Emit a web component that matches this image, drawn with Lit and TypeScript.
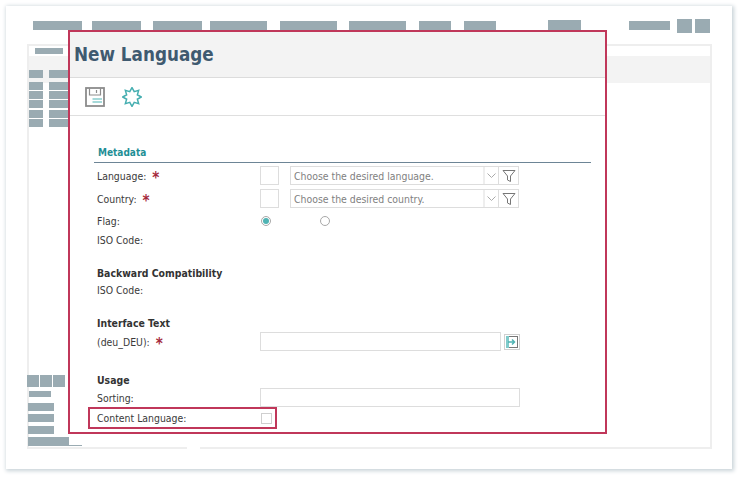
import { LitElement, html, css } from "lit";
import { customElement } from "lit/decorators.js";

const nav: [number, number][] = [[49, 10], [49, 12], [49, 8], [57, 13], [57, 12], [57, 13], [32, 13], [32, 52]];

const starPoints = Array.from({ length: 16 }, (_, i) => {
  const r = i % 2 === 0 ? 9.4 : 5.8;
  const a = (i * Math.PI) / 8 - Math.PI / 2;
  return `${(10 + r * Math.cos(a)).toFixed(2)},${(10 + r * Math.sin(a)).toFixed(2)}`;
}).join(" ");

@customElement("app-root")
export class AppRoot extends LitElement {
  static styles = css`
    :host { display: block; position: relative; width: 742px; height: 479px; overflow: hidden; background: #fff;
      font-family: "DejaVu Sans", "Noto Sans", sans-serif; font-stretch: condensed; font-size: 10.4px; color: #3a3a3a; }
    * { box-sizing: border-box; }
    .card { position: absolute; left: 6px; top: 6px; width: 726px; height: 463px; background: #fff;
      box-shadow: 1px 1px 4px 1px #c9d3d8; padding: 13px 20px 20px 21px; display: flex; flex-direction: column; }
    .b { background: #9aabb2; flex: none; }
    .nav { display: flex; align-items: flex-start; height: 25px; padding: 2px 0 0 6px; }
    .nav .b { height: 9px; }
    .nav .tall { height: 10px; margin-top: -1px; width: 33px; }
    .nav .wide { width: 41px; height: 9px; margin-left: 48px; }
    .nav .sq { width: 15px; height: 14px; margin-top: -2px; margin-left: 3px; }
    .nav .sq.first { margin-left: 7px; }
    .panel { flex: 1; display: flex; gap: 13px; min-height: 0; }
    .left { width: 160px; border: solid #eeeeee; border-width: 2px 0 2px 2px; padding-bottom: 1px; position: relative;
      display: flex; flex-direction: column; }
    .right { flex: 1; border: solid #eeeeee; border-width: 2px 2px 2px 0; display: flex; flex-direction: column; padding-top: 10px; }
    .band { height: 27px; background: #f3f3f3; flex: none; }
    .tabbar { height: 10px; padding: 2px 0 0 6px; flex: none; }
    .tabbar .b { width: 28px; height: 6px; }
    .tbl { display: grid; grid-template-columns: 14px 20px; column-gap: 6px; row-gap: 1.3px; margin: -13px 0 0 0; flex: none; }
    .tbl .b { height: 8px; }
    .tbl .b:nth-child(1), .tbl .b:nth-child(2) { margin-bottom: 2.5px; }
    .fill { flex: 1; }
    .btns { display: flex; gap: 1px; margin-left: -2px; flex: none; }
    .btns .b { width: 12px; height: 12px; }
    .s1 { width: 22px; height: 6px; margin: 4px 0 6px 0; }
    .s2 { width: 26px; height: 8px; margin: 0 0 3.5px -1px; }
    .s3 { width: 41px; height: 8px; margin: 0 0 0 -1px; }
    .tail { height: 1px; width: 54px; background: #9aabb2; margin-left: -1px; flex: none; }

    .modal { position: absolute; left: 68px; top: 30px; width: 539px; height: 404px; background: #fff; border: 2px solid #c0375a;
      display: flex; flex-direction: column; }
    .head { height: 46px; flex: none; background: #f3f3f3; border-bottom: 1px solid #dcdcdc; padding: 10px 0 0 4px;
      font-size: 18.7px; font-weight: 700; line-height: 26px; color: #3f5a70; }
    .tools { height: 38px; flex: none; border-bottom: 1px solid #dfdfdf; display: flex; align-items: center; padding: 0 0 0 15px; gap: 17px; }
    .form { padding: 31px 15px 0 27px; display: flex; flex-direction: column; flex: none; }
    .meta { font-size: 10px; font-weight: 700; color: #1f8f96; height: 15px; line-height: 12px; padding-left: 1px; flex: none; }
    .rule { height: 1px; background: #6d8596; margin: 0 -1px 1px -3px; flex: none; }
    .row { display: flex; align-items: center; height: 23px; flex: none; }
    .label { width: 163px; flex: none; line-height: 12px; }
    .star { display: inline-block; transform: translateY(3px); color: #a52a3c; font-weight: 700; font-size: 15px; margin-left: 3px; line-height: 10px; }
    .sm { height: 19px; border: 1px solid #dddddd; width: 19px; flex: none; margin-right: 11px; }
    .select { width: 229px; height: 19px; border: 1px solid #dddddd; display: flex; flex: none; color: #7f7f7f; align-items: center; }
    .select .txt { flex: 1; padding-left: 3px; white-space: nowrap; }
    .select .arr { width: 15px; height: 17px; border-left: 2px solid #eeeeee; display: flex; align-items: center; justify-content: center; }
    .select .fil { width: 20px; height: 17px; border-left: 1px solid #dddddd; display: flex; align-items: center; justify-content: center; }
    .r19 { height: 19px; }
    .radio { width: 10px; height: 10px; border-radius: 50%; border: 1px solid #a8a8a8; display: flex; align-items: center; justify-content: center; flex: none; }
    .radio.on::after { content: ""; width: 6px; height: 6px; border-radius: 50%; background: #4fb3b3; }
    .radios { display: flex; padding-left: 1px; gap: 49px; }
    .h { font-weight: 700; color: #333; line-height: 12px; height: 14px; flex: none; }
    .h.short { height: 13px; }
    .h.back { margin-top: 18px; }
    .h.iface { margin-top: 18px; height: 15px; }
    .h.usage { margin-top: 23px; }
    .flag { margin-top: 1px; }
    .input { height: 19px; border: 1px solid #dddddd; flex: none; }
    .input.w241 { width: 241px; }
    .input.w260 { width: 260px; }
    .btn { width: 16px; height: 16px; border: 1px solid #d0d0d0; margin-left: 3px; padding: 1px; display: flex; }
    .mark { display: flex; align-items: center; height: 22px; width: 189px; border: 2px solid #c0375a; margin: 0 0 0 -9px; padding-left: 7px; flex: none; }
    .mark .label { width: 164px; }
    .cb { width: 11px; height: 11px; border: 1px solid #cfcfcf; flex: none; }
  `;

  filter() {
    return html`<svg width="14" height="14" viewBox="0 0 14 14" fill="none" stroke="#777" stroke-width="1">
      <path d="M1 1.500h12L8.500 7v5.500l-3-1.500V7z" /></svg>`;
  }
  chev() {
    return html`<svg width="9" height="6" viewBox="0 0 9 6" fill="none" stroke="#aaa"><path d="M.5 .5 4.500 4.500 8.500 .5" /></svg>`;
  }
  star() {
    return html`<span class="star">*</span>`;
  }

  render() {
    const rows = Array.from({ length: 12 }, () => html`<div class="b"></div>`);
    return html`
      <div class="card">
        <div class="nav">
          ${nav.map(([w, m]) => html`<div class="b" style="width:${w}px;margin-right:${m}px"></div>`)}
          <div class="b tall"></div>
          <div class="b wide"></div>
          <div class="b sq first"></div>
          <div class="b sq"></div>
        </div>
        <div class="panel">
          <div class="left">
            <div class="tabbar"><div class="b"></div></div>
            <div class="band"></div>
            <div class="tbl">${rows}</div>
            <div class="fill"></div>
            <div class="btns"><div class="b"></div><div class="b"></div><div class="b"></div></div>
            <div class="b s1"></div>
            <div class="b s2"></div>
            <div class="b s2"></div>
            <div class="b s2"></div>
            <div class="b s3"></div>
            <div class="tail"></div>
          </div>
          <div class="right"><div class="band"></div></div>
        </div>
      </div>

      <div class="modal">
        <div class="head">New Language</div>
        <div class="tools">
          <svg width="20" height="20" viewBox="0 0 20 20" fill="none">
            <rect x="1" y="1" width="18" height="18" stroke="#8c8c8c" stroke-width="1.800" />
            <path d="M4.500 1.500v6.500h11v-6.500M11.500 3v3" stroke="#8c8c8c" stroke-width="1.200" />
            <path d="M7.500 12h9.500M7.500 15h9.500" stroke="#4fb3b3" stroke-width="1.200" />
          </svg>
          <svg width="20" height="20" viewBox="0 0 20 20" fill="none" stroke="#45aeb0" stroke-width="1.500">
            <polygon points=${starPoints} />
          </svg>
        </div>
        <div class="form">
          <div class="meta">Metadata</div>
          <div class="rule"></div>
          <div class="row">
            <div class="label">Language: ${this.star()}</div>
            <div class="sm"></div>
            <div class="select"><span class="txt">Choose the desired language.</span><span class="arr">${this.chev()}</span><span class="fil">${this.filter()}</span></div>
          </div>
          <div class="row">
            <div class="label">Country: ${this.star()}</div>
            <div class="sm"></div>
            <div class="select"><span class="txt">Choose the desired country.</span><span class="arr">${this.chev()}</span><span class="fil">${this.filter()}</span></div>
          </div>
          <div class="row r19 flag">
            <div class="label">Flag:</div>
            <div class="radios"><div class="radio on"></div><div class="radio"></div></div>
          </div>
          <div class="row r19">
            <div class="label">ISO Code:</div>
          </div>

          <div class="h short back">Backward Compatibility</div>
          <div class="row r19"><div class="label">ISO Code:</div></div>

          <div class="h iface">Interface Text</div>
          <div class="row r19">
            <div class="label">(deu_DEU): ${this.star()}</div>
            <div class="input w241"></div>
            <div class="btn">
              <svg width="12" height="12" viewBox="0 0 12 12" fill="none">
                <rect x=".5" y=".5" width="11" height="11" stroke="#777" />
                <rect x="0" y="0" width="3" height="12" fill="#7fcaca" />
                <path d="M2 6h6M6 3.500 8.500 6 6 8.500" stroke="#4fb3b3" stroke-width="1.500" />
              </svg>
            </div>
          </div>

          <div class="h usage">Usage</div>
          <div class="row r19">
            <div class="label">Sorting:</div>
            <div class="input w260"></div>
          </div>
          <div class="mark">
            <div class="label">Content Language:</div>
            <div class="cb"></div>
          </div>
        </div>
      </div>
    `;
  }
}
